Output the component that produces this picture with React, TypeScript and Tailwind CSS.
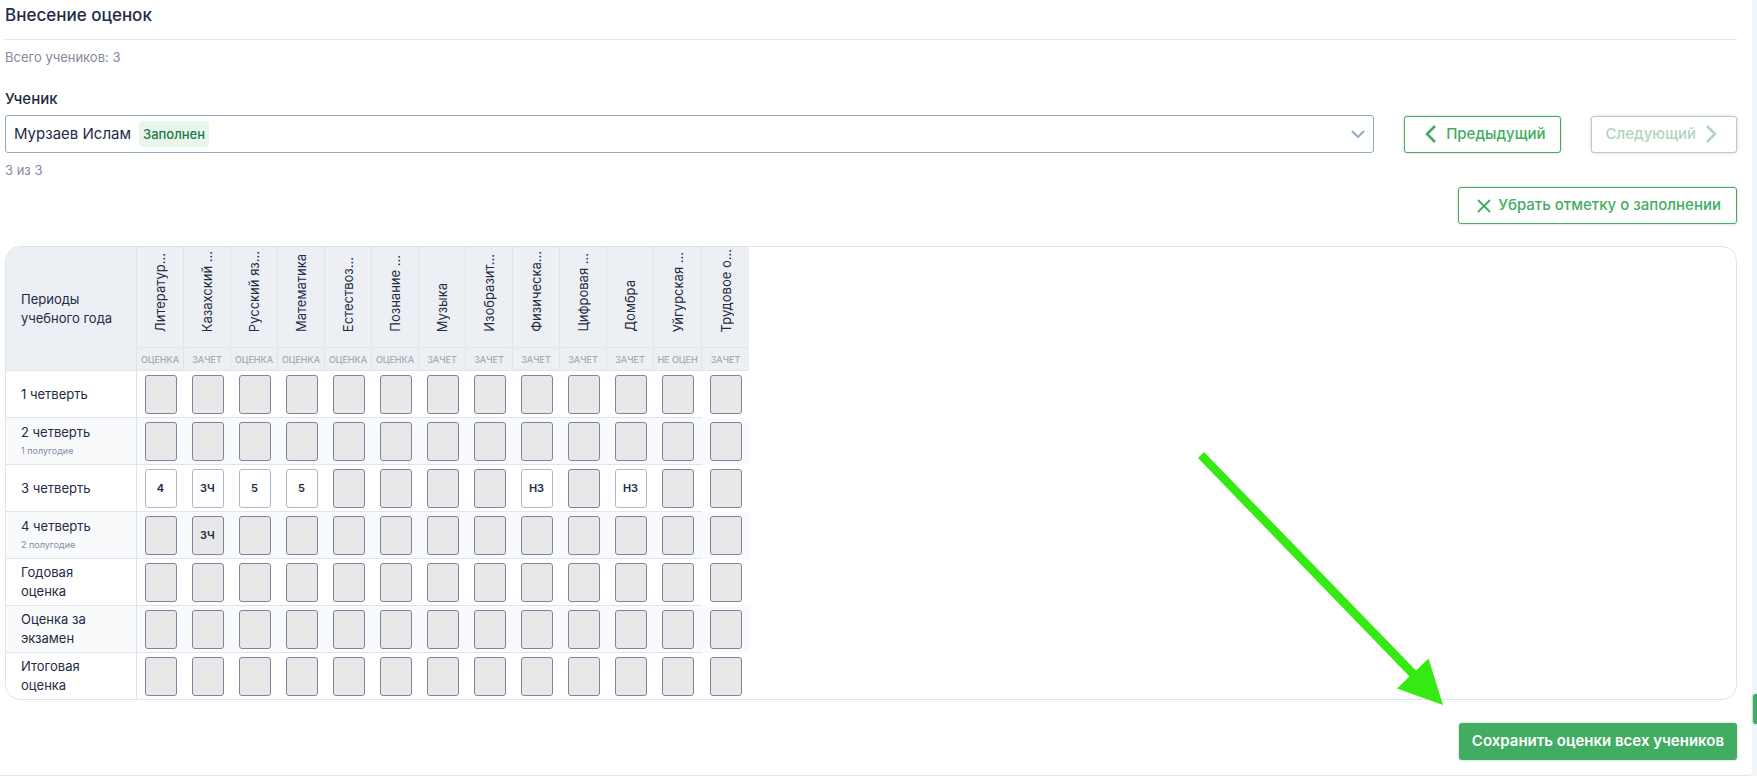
import { useState } from "react";

interface Subject {
  name: string;
  type: string;
}

interface Period {
  name: string;
  note?: string;
  grades?: Record<number, string>;
  editable?: boolean;
}

const subjects: Subject[] = [
  { name: "Литератур...", type: "ОЦЕНКА" },
  { name: "Казахский ...", type: "ЗАЧЕТ" },
  { name: "Русский яз...", type: "ОЦЕНКА" },
  { name: "Математика", type: "ОЦЕНКА" },
  { name: "Естествоз...", type: "ОЦЕНКА" },
  { name: "Познание ...", type: "ОЦЕНКА" },
  { name: "Музыка", type: "ЗАЧЕТ" },
  { name: "Изобразит...", type: "ЗАЧЕТ" },
  { name: "Физическа...", type: "ЗАЧЕТ" },
  { name: "Цифровая ...", type: "ЗАЧЕТ" },
  { name: "Домбра", type: "ЗАЧЕТ" },
  { name: "Уйгурская ...", type: "НЕ ОЦЕН" },
  { name: "Трудовое о...", type: "ЗАЧЕТ" },
];

const periods: Period[] = [
  { name: "1 четверть" },
  { name: "2 четверть", note: "1 полугодие" },
  {
    name: "3 четверть",
    grades: { 0: "4", 1: "ЗЧ", 2: "5", 3: "5", 8: "НЗ", 10: "НЗ" },
    editable: true,
  },
  { name: "4 четверть", note: "2 полугодие", grades: { 1: "ЗЧ" } },
  { name: "Годовая оценка" },
  { name: "Оценка за экзамен" },
  { name: "Итоговая оценка" },
];

const outlineButton =
  "flex h-[37px] items-center rounded-[3px] border bg-white text-[15px] font-medium shadow-[0_0_3px_rgba(0,0,0,0.2)]";

export default function App() {
  return (
    <div className="relative overflow-hidden bg-[#f1f6fa] pr-[5px] font-[Inter,'Noto_Sans',sans-serif] text-[#232b45]">
      <main className="rounded-br-[4px] border-b border-[#e0e8ee] bg-white pr-[15px] pb-[15px] pl-[5px]">
        <h1 className="border-b border-[#e1e5e9] pt-[3px] pb-3 text-[17px] leading-6 font-medium">
          Внесение оценок
        </h1>
        <p className="mt-[7px] text-[13px] leading-5 text-[#8389a0]">Всего учеников: 3</p>

        <StudentPicker />

        <div className="mt-[7px] flex justify-end">
          <button type="button" className={`${outlineButton} border-[#41ad62] pr-[15px] pl-[18px] text-[#41ad62]`}>
            <svg className="mr-[7px] h-[14px] w-[14px]" viewBox="0 0 14 14" fill="none" stroke="currentColor" strokeWidth="1.8" aria-hidden="true">
              <path d="M1 1l12 12M13 1L1 13" />
            </svg>
            Убрать отметку о заполнении
          </button>
        </div>

        <GradesTable />

        <div className="mt-[23px] flex justify-end">
          <button
            type="button"
            className="h-[37px] rounded-[3px] bg-[#41ad62] px-[13px] text-[15px] font-semibold text-white shadow-[0_0_3px_rgba(0,0,0,0.25)]"
          >
            Сохранить оценки всех учеников
          </button>
        </div>
      </main>

      <button
        type="button"
        aria-label="Открыть панель"
        className="absolute right-0 bottom-[52px] h-[30px] w-1 rounded-l-[3px] bg-[#41ad62] shadow-[0_0_3px_rgba(0,0,0,0.3)]"
      />
      <PointerArrow />
    </div>
  );
}

function StudentPicker() {
  return (
    <section className="mt-[22px]">
      <label htmlFor="student" className="block text-[15px] leading-5 font-medium">
        Ученик
      </label>
      <div className="mt-[6px] flex items-center gap-[30px]">
        <div className="relative flex-1">
          <select
            id="student"
            className="h-[38px] w-full appearance-none rounded-[3px] border border-[#93acc4] bg-white px-2 text-[15px]"
          >
            <option>Мурзаев Ислам</option>
          </select>
          <span className="pointer-events-none absolute top-[6px] left-[134px] rounded-[4px] bg-[#e9f6ee] px-1 text-[13px] leading-[26px] font-medium text-[#1c7a42]">
            Заполнен
          </span>
          <svg
            className="pointer-events-none absolute top-[15px] right-[9px] h-2 w-[14px] text-[#93acc4]"
            viewBox="0 0 14 8"
            fill="none"
            stroke="currentColor"
            strokeWidth="2"
            aria-hidden="true"
          >
            <path d="M1 1l6 6 6-6" />
          </svg>
        </div>
        <button type="button" className={`${outlineButton} border-[#41ad62] pr-[14px] pl-5 text-[#41ad62]`}>
          <svg className="mr-[10px] h-[18px] w-[11px]" viewBox="0 0 11 18" fill="none" stroke="currentColor" strokeWidth="2.6" aria-hidden="true">
            <path d="M10 1L2 9l8 8" />
          </svg>
          Предыдущий
        </button>
        <button type="button" disabled className={`${outlineButton} border-[#b3d3be] pr-[19px] pl-[14px] text-[#b3d3be]`}>
          Следующий
          <svg className="ml-[10px] h-[18px] w-[11px]" viewBox="0 0 11 18" fill="none" stroke="currentColor" strokeWidth="2.6" aria-hidden="true">
            <path d="M1 1l8 8-8 8" />
          </svg>
        </button>
      </div>
      <p className="mt-[7px] text-[13px] leading-5 text-[#8389a0]">3 из 3</p>
    </section>
  );
}

function GradesTable() {
  return (
    <div className="mt-[22px] overflow-hidden rounded-[15px] border border-[#dfe4ec]">
      <table className="w-[743px] table-fixed border-separate border-spacing-0">
        <colgroup>
          <col className="w-[131px]" />
          {subjects.map((s) => (
            <col key={s.name} className={s.type === "НЕ ОЦЕН" ? "w-[48px]" : "w-[47px]"} />
          ))}
        </colgroup>
        <thead>
          <tr className="bg-[#eceff4]">
            <th className="border-r border-b border-[#dfe4ec] px-[15px] text-left text-[13px] leading-[19px] font-normal">
              Периоды учебного года
            </th>
            {subjects.map((s) => (
              <th
                key={s.name}
                scope="col"
                className="border-r border-b border-[#dfe4ec] p-0 font-normal last:border-r-0"
              >
                <div className="flex h-[100px] items-end justify-center pb-[15px]">
                  <span className="rotate-180 text-[13px] leading-5 whitespace-nowrap [writing-mode:vertical-rl]">
                    {s.name}
                  </span>
                </div>
                <div className="mx-px h-[23px] border-t border-[#dfe4ec] text-[9px] leading-[23px] font-medium whitespace-nowrap text-[#a6a8ad]">
                  {s.type}
                </div>
              </th>
            ))}
          </tr>
        </thead>
        <tbody>
          {periods.map((p) => (
            <PeriodRow key={p.name} period={p} />
          ))}
        </tbody>
      </table>
    </div>
  );
}

function PeriodRow({ period }: { period: Period }) {
  return (
    <tr className="group h-[47px] last:h-[46px] even:bg-[#f9fafc]">
      <th
        scope="row"
        className="border-r border-b border-[#dfe4ec] py-0 pr-8 pl-[15px] text-left text-[13px] leading-[19px] font-normal group-last:border-b-0"
      >
        {period.name}
        {period.note && <span className="block text-[9px] leading-[17px] text-[#8389a0]">{period.note}</span>}
      </th>
      {subjects.map((s, i) => (
        <td
          key={s.name}
          className="border-b border-[#dfe4ec] p-0 group-last:border-b-0 last:border-b-0"
        >
          <GradeCell
            label={`${period.name}, ${s.name}`}
            initial={period.grades?.[i] ?? ""}
            editable={Boolean(period.editable && period.grades?.[i])}
          />
        </td>
      ))}
    </tr>
  );
}

function GradeCell({ label, initial, editable }: { label: string; initial: string; editable: boolean }) {
  const [value, setValue] = useState(initial);

  return (
    <input
      aria-label={label}
      value={value}
      disabled={!editable}
      onChange={(e) => setValue(e.target.value)}
      className="mx-auto block h-[39px] w-8 rounded-[3px] border border-[#b0b6c6] bg-white text-center text-[11px] font-semibold disabled:border-[#7c84a0] disabled:bg-[#e8e8e8]"
    />
  );
}

function PointerArrow() {
  return (
    <svg
      className="pointer-events-none absolute right-[314px] bottom-[70px] h-[254px] w-[246px]"
      viewBox="0 0 246 254"
      fill="#35ea12"
      aria-hidden="true"
    >
      <path d="M7 0L219 218.500 231.500 206.500 246 253 200 236.500 212.500 224.500 1 6Z" />
    </svg>
  );
}
